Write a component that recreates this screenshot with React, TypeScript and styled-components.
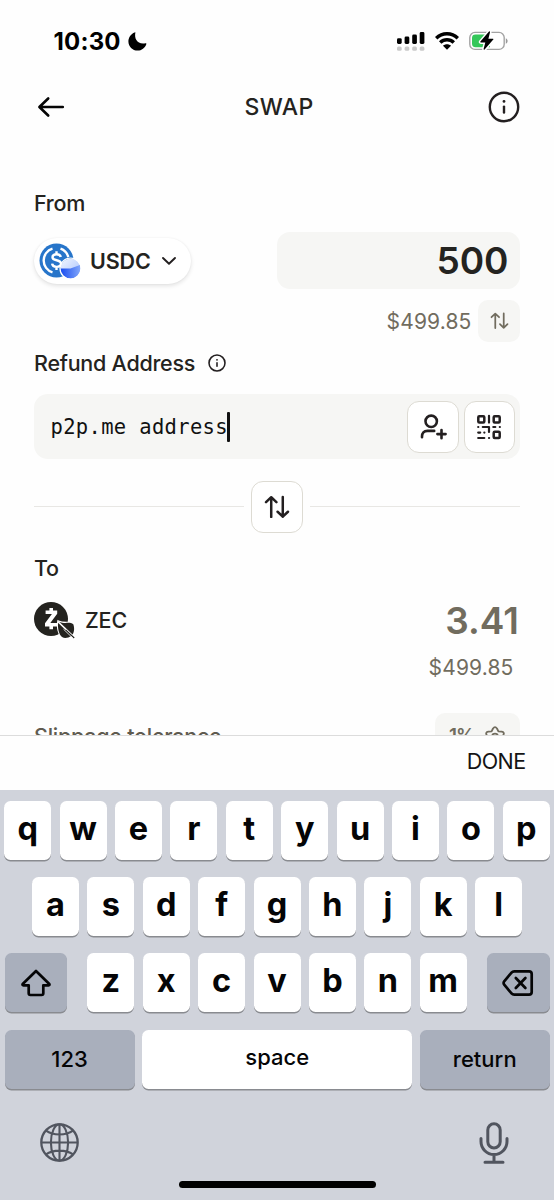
import React from "react";
import styled, { createGlobalStyle } from "styled-components";

const GlobalStyle = createGlobalStyle`
  * { box-sizing: border-box; }
  body { margin: 0; background: #fefefe; }
`;

const ink = "#231f20";
const muted = "#716c5e";
const field = "#f6f6f4";

const Screen = styled.main`
  width: 554px;
  height: 1200px;
  display: flex;
  flex-direction: column;
  overflow: hidden;
  background: #fefefe;
  color: #242320;
  font-family: Inter, "Liberation Sans", sans-serif;
`;

const StatusBar = styled.header`
  flex: none;
  height: 82px;
  padding: 0 46px 0 53.5px;
  display: flex;
  align-items: center;
  color: #000;
`;

const Clock = styled.span`
  font-size: 24px;
  font-weight: 700;
  letter-spacing: 0.2px;
  margin-right: 7px;
`;

const StatusIcons = styled.div`
  margin-left: auto;
  display: flex;
  align-items: center;
  gap: 10px;
`;

const NavBar = styled.nav`
  flex: none;
  height: 50px;
  padding: 0 34px 0 35px;
  display: grid;
  grid-template-columns: 32px 1fr 32px;
  align-items: center;
  justify-items: center;
`;

const Title = styled.h1`
  margin: 0 0 0 3px;
  font-size: 23px;
  font-weight: 500;
  letter-spacing: 0.4px;
`;

const Form = styled.section`
  flex: none;
  height: 603px;
  overflow: hidden;
  padding: 58px 34px 0;
  display: flex;
  flex-direction: column;
`;

const Label = styled.div<{ $top?: number; $height?: number }>`
  flex: none;
  height: ${(p) => p.$height ?? 26}px;
  margin-top: ${(p) => p.$top ?? 0}px;
  display: flex;
  align-items: center;
  gap: 12.5px;
  font-size: 21.5px;
  font-weight: 500;
  letter-spacing: -0.25px;
`;

const Row = styled.div<{ $top: number; $height: number; $end?: boolean }>`
  flex: none;
  height: ${(p) => p.$height}px;
  margin-top: ${(p) => p.$top}px;
  display: flex;
  align-items: center;
  justify-content: ${(p) => (p.$end ? "flex-end" : "space-between")};
`;

const TokenPill = styled.button`
  width: 157px;
  height: 46px;
  padding: 0 0 0 5px;
  border: 0;
  border-radius: 23px;
  background: #fff;
  box-shadow: 0 2px 4px rgba(0, 0, 0, 0.11), 0 0 2px rgba(0, 0, 0, 0.05);
  display: flex;
  align-items: center;
  font: inherit;
  color: inherit;
`;

const Token = styled.div`
  display: flex;
  align-items: center;
`;

const TokenName = styled.span<{ $weight: number; $left: number; $right?: number }>`
  margin-left: ${(p) => p.$left}px;
  margin-right: ${(p) => p.$right ?? 0}px;
  font-size: 21.5px;
  font-weight: ${(p) => p.$weight};
  letter-spacing: -0.15px;
`;

const AmountField = styled.div`
  width: 243px;
  height: 57px;
  padding-right: 11.5px;
  border-radius: 13px;
  background: ${field};
  display: flex;
  align-items: center;
  justify-content: flex-end;
  font-size: 37px;
  font-weight: 600;
`;

const Amount = styled.span`
  margin-right: 1px;
  font-size: 37px;
  font-weight: 600;
  color: ${muted};
`;

const Fiat = styled.span<{ $right: number }>`
  margin-right: ${(p) => p.$right}px;
  font-size: 21px;
  letter-spacing: 0.15px;
  color: ${muted};
`;

const FlipButton = styled.button`
  width: 42px;
  height: 42px;
  padding: 0;
  border: 0;
  border-radius: 10px;
  background: ${field};
  display: grid;
  place-items: center;
`;

const AddressField = styled.div`
  flex: none;
  height: 65px;
  margin-top: 18px;
  padding: 0 5px 0 16.5px;
  border-radius: 14px;
  background: ${field};
  display: flex;
  align-items: center;
  gap: 5px;
`;

const AddressText = styled.div`
  flex: 1;
  display: flex;
  align-items: center;
  font-family: "DejaVu Sans Mono", monospace;
  font-size: 20.5px;
  letter-spacing: 0.33px;
  color: #111;
`;

const Caret = styled.i`
  width: 3px;
  height: 30px;
  margin-left: -1px;
  border-radius: 1px;
  background: #111;
`;

const SquareButton = styled.button`
  width: 51.5px;
  height: 52px;
  padding: 0;
  border: 1.5px solid #dddbd3;
  border-radius: 12px;
  background: #fff;
  display: grid;
  place-items: center;
`;

const Divider = styled.div`
  flex: none;
  margin-top: 21.5px;
  height: 52px;
  display: grid;
  grid-template-columns: 1fr 51.5px 1fr;
  column-gap: 7px;
  align-items: center;
`;

const Rule = styled.span`
  height: 1.5px;
  background: #e8e7e4;
`;

const Slippage = styled.span`
  font-size: 21.5px;
  font-weight: 500;
  letter-spacing: -0.25px;
  color: #5f5b50;
`;

const SlippageChip = styled.div`
  width: 85px;
  height: 45px;
  padding-right: 15px;
  border-radius: 10px;
  background: ${field};
  display: flex;
  align-items: center;
  justify-content: flex-end;
  gap: 11px;
  font-size: 19px;
  font-weight: 600;
  letter-spacing: -1px;
  color: ${muted};
`;

const Accessory = styled.div`
  flex: none;
  height: 55px;
  padding: 0 28.5px 5px 0;
  border-top: 1.5px solid #dcdcdc;
  background: #fefefe;
  display: flex;
  align-items: center;
  justify-content: flex-end;
  font-size: 21.5px;
  letter-spacing: -0.6px;
  color: #141414;
`;

const Keyboard = styled.footer`
  flex: none;
  height: 410px;
  padding: 11px 4.5px 0;
  background: #d0d3db;
  display: flex;
  flex-direction: column;
  align-items: center;
`;

const KeyRow = styled.div<{ $spread?: boolean }>`
  width: ${(p) => (p.$spread ? "100%" : "auto")};
  height: 59.3px;
  margin-bottom: 16.9px;
  display: flex;
  justify-content: ${(p) => (p.$spread ? "space-between" : "center")};
  gap: ${(p) => (p.$spread ? 0 : 8.4)}px;
`;

const KeyGroup = styled.div`
  display: flex;
  gap: 8.4px;
`;

const Key = styled.button<{ $width?: number; $dark?: boolean; $word?: boolean; $lift?: number }>`
  width: ${(p) => p.$width ?? 47}px;
  height: 59px;
  padding: 0 0 ${(p) => p.$lift ?? 4}px;
  border: 0;
  border-radius: 6.5px;
  background: ${(p) => (p.$dark ? "#a9afbc" : "#fff")};
  box-shadow: 0 1.5px 0 #898b90;
  display: flex;
  align-items: center;
  justify-content: center;
  font-family: inherit;
  font-size: ${(p) => (p.$word ? 22 : 32.5)}px;
  font-weight: ${(p) => (p.$word ? 500 : 700)};
  color: #050506;
`;

const KeyboardFooter = styled.div`
  width: 100%;
  height: 46px;
  margin-top: 14px;
  padding: 0 41px 0 34.5px;
  display: flex;
  justify-content: space-between;
  align-items: center;
`;

const HomeIndicator = styled.div`
  width: 197px;
  height: 7px;
  margin-top: 15px;
  border-radius: 4px;
  background: #000;
`;

const Moon = () => (
  <svg width="19" height="19" viewBox="0 0 19 19">
    <path d="M7.4.6C6 6.800 9.500 12.800 17.400 11.300q1.200-.2 1 .7C17 16 13.700 18.600 9.600 18.600 4.500 18.600.4 14.600.4 9.500.4 5.400 2.900 1.800 6.600.4q.9-.2.8.2Z" />
  </svg>
);

const Signal = () => (
  <svg width="28" height="20" viewBox="0 0 28 20">
    <rect x="0" y="7.200" width="4.700" height="5.800" rx="1.400" />
    <rect x="7.600" y="5.500" width="4.700" height="7.500" rx="1.400" />
    <rect x="15.200" y="3.500" width="4.700" height="9.500" rx="1.400" />
    <rect x="22.700" y="1" width="4.700" height="12" rx="1.400" />
    <g fill="#c9c9c9">
      <rect x="0" y="15.500" width="4.700" height="4.300" rx="1.500" />
      <rect x="7.600" y="15.500" width="4.700" height="4.300" rx="1.500" />
      <rect x="15.200" y="15.500" width="4.700" height="4.300" rx="1.500" />
      <rect x="22.700" y="15.500" width="4.700" height="4.300" rx="1.500" />
    </g>
  </svg>
);

const Wifi = () => (
  <svg width="24" height="18" viewBox="0 0 24 18">
    <g fill="none" stroke="#000" strokeWidth="3.500">
      <path d="M1.200 6.200C7.300.4 16.700.4 22.800 6.200" />
      <path d="M5.200 10.600C9.100 6.900 14.900 6.900 18.800 10.600" />
    </g>
    <path d="M12 17.800 8 13.800C10.200 11.800 13.800 11.800 16 13.800Z" />
  </svg>
);

const Battery = () => (
  <svg width="39" height="20" viewBox="0 0 39 20">
    <rect x=".8" y="1.400" width="34.400" height="17" rx="5.200" fill="#fff" stroke="#a3a3a3" strokeWidth="1.400" />
    <path d="M36.800 7.200c2.400 1 2.400 4.600 0 5.600Z" fill="#999" />
    <path d="M6.500 3.600H21V16.200H6.500Q3 16.200 3 12.800V7Q3 3.600 6.500 3.600Z" fill="#34c759" />
    <path
      d="M20 .5 11.400 10.600q-.5.8.4.8h4.500L14.600 18q0 1.200 1 .5L24.300 8.600q.5-.9-.4-.9h-4.500L21 1.200Q21-.4 20 .5Z"
      stroke="#fff"
      strokeWidth="3"
      paintOrder="stroke"
    />
  </svg>
);

const BackArrow = () => (
  <svg width="28" height="22" viewBox="0 0 28 22" fill="none" stroke="#050505" strokeWidth="2.600" strokeLinecap="round" strokeLinejoin="round">
    <path d="M25.800 11H2.500M11.200 2.500 2.400 11l8.800 8.500" />
  </svg>
);

const Info = ({ size, stroke }: { size: number; stroke: number }) => (
  <svg width={size} height={size} viewBox="0 0 32 32" fill="none" stroke={ink} strokeWidth={stroke} strokeLinecap="round">
    <circle cx="16" cy="16" r="14.200" />
    <path d="M16 15.600v6" />
    <path d="M16 10.300v.1" strokeWidth={stroke * 1.15} />
  </svg>
);

const UsdcLogo = () => (
  <svg width="44" height="38" viewBox="0 0 44 38">
    <defs>
      <linearGradient id="sky" x1="0" y1="0" x2="1" y2="1">
        <stop offset="0" stopColor="#f2f6ff" />
        <stop offset="1" stopColor="#a4c0fc" />
      </linearGradient>
      <linearGradient id="base" x1="0" y1="0" x2="1" y2="0">
        <stop offset="0" stopColor="#174bf0" />
        <stop offset="1" stopColor="#84a8fa" />
      </linearGradient>
    </defs>
    <circle cx="17.500" cy="18.500" r="17" fill="#2775ca" />
    <g fill="none" stroke="#fff" strokeWidth="2.400">
      <path d="M13.500 6.700A12.300 12.300 0 0 0 13.500 30.300" />
      <path d="M21.500 6.700A12.300 12.300 0 0 1 29.300 15.100" />
      <path d="M21.800 15.100C21.400 13.100 19.900 12.200 17.500 12.200S13.500 13.200 13.500 15.200C13.500 19.700 22 16.800 22 21.600C22 23.700 20.100 24.900 17.500 24.900S13.400 23.900 13.100 21.700M17.500 9.200V12.200M17.500 24.900V27.900" />
    </g>
    <circle cx="31.500" cy="26.500" r="10" fill="url(#sky)" />
    <path d="M21.500 26.500H31.500L40.900 23.100A10 10 0 1 1 21.500 26.500Z" fill="url(#base)" />
    <circle cx="31.500" cy="26.500" r="10.500" fill="none" stroke="#fff" strokeWidth="1.200" />
  </svg>
);

const ZecLogo = () => (
  <svg width="42" height="38" viewBox="0 0 42 38">
    <circle cx="17" cy="18" r="17" fill="#24231f" />
    <path
      d="M15.400 7h3.600v2.500h4.200v3.300L16.300 22h6.900v3.500H19v2.800h-3.600v-2.800H11v-3.300L17.900 13H11.600V9.500h3.800Z"
      fill="#fff"
    />
    <path
      d="M24.300 20.400C31 23.600 35.500 20.200 39.300 23.300C41 28 40 33 37.300 35C34.300 36.700 31 38 28 36C24.600 32.900 23.300 26.100 24.300 20.400Z"
      fill="#24231f"
      stroke="#fff"
      strokeWidth="2.200"
      paintOrder="stroke"
    />
    <path d="M23.800 20.500 39 35" stroke="#fff" strokeWidth="1.700" />
    <path d="M31.500 29 40.200 37" stroke="#24231f" strokeWidth="1.300" />
    <path d="M29.500 28.200 39.500 37.800" stroke="#fff" strokeWidth="0.800" />
  </svg>
);

const Chevron = () => (
  <svg width="16" height="10" viewBox="0 0 16 10" fill="none" stroke={ink} strokeWidth="1.900" strokeLinecap="round" strokeLinejoin="round">
    <path d="M2 2l6 5.800L14 2" />
  </svg>
);

const SwapArrows = ({ width, stroke, color }: { width: number; stroke: number; color: string }) => (
  <svg width={width} height={width * 0.92} viewBox="0 0 26 24" fill="none" stroke={color} strokeWidth={stroke} strokeLinecap="round" strokeLinejoin="round">
    <path d="M7.200 22V2.200M2 7.200l5.200-5L12.400 7.200" />
    <path d="M18.800 2v19.800M13.600 16.800l5.200 5 5.200-5" />
  </svg>
);

const AddPerson = () => (
  <svg width="28" height="26" viewBox="0 0 28 26" fill="none" stroke={ink} strokeWidth="2.600" strokeLinecap="round" strokeLinejoin="round">
    <circle cx="12.200" cy="7.300" r="5.700" />
    <path d="M3 23.200V22.600Q3 16.900 8.500 16.900H15.200M22.500 16v8.200M18.400 20.100h8.200" />
  </svg>
);

const QrGlyph = () => (
  <svg width="26" height="26" viewBox="0 0 26 26" fill="none" stroke={ink} strokeWidth="2.500" strokeLinecap="round" strokeLinejoin="round">
    <rect x="2.300" y="2.300" width="6" height="6.200" rx="1" />
    <rect x="17.700" y="2.300" width="6" height="6.200" rx="1" />
    <rect x="17.700" y="17.700" width="6" height="6.200" rx="1" />
    <path d="M13 1.800V8.600M2.200 13h.1M6.800 13H13V18M17.300 13h2M23.800 13h.1M2.200 18.600h2M8.300 18.600h.1M2.200 24H8.300M13 24h.1" strokeWidth="2.200" />
  </svg>
);

const StarGear = () => (
  <svg width="20" height="20" viewBox="0 0 20 20" fill="none" stroke={muted} strokeWidth="1.800" strokeLinejoin="round">
    <path d="M8 2.500Q10-.1 12 2.500L13.400 5.400 16.700 5.700Q19.900 6.300 18.300 9L16.400 11.400 17.400 14.600Q17.600 17.700 14.500 17.200L10 15.800 5.500 17.200Q2.400 17.700 2.600 14.600L3.600 11.400 1.700 9Q.1 6.300 3.300 5.700L6.600 5.400Z" />
    <circle cx="10" cy="10.600" r="3" />
  </svg>
);

const Shift = () => (
  <svg width="32" height="28" viewBox="0 0 32 28" fill="none" stroke="#050506" strokeWidth="2.700" strokeLinejoin="round">
    <path d="M16 2 29.300 15Q30 16.300 28.600 16.300H23.300V24.300Q23.300 26 21.600 26H10.400Q8.700 26 8.700 24.300V16.300H3.400Q2 16.300 2.700 15Z" />
  </svg>
);

const Backspace = () => (
  <svg width="32" height="28" viewBox="0 0 32 28" fill="none" stroke="#050506" strokeWidth="2.700" strokeLinecap="round" strokeLinejoin="round">
    <path d="M12.200 2.300H27Q29.700 2.300 29.700 5V23Q29.700 25.700 27 25.700H12.200Q10.600 25.700 9.500 24.400L2.200 15.700Q1 14 2.200 12.300L9.500 3.600Q10.600 2.300 12.200 2.300Z" />
    <path d="M13.800 9 23.400 19M23.400 9 13.800 19" />
  </svg>
);

const Globe = () => (
  <svg width="41" height="41" viewBox="0 0 41 41" fill="none" stroke="#51555f" strokeWidth="2.100">
    <circle cx="20.500" cy="20.500" r="18.200" strokeWidth="2.300" />
    <ellipse cx="20.500" cy="20.500" rx="8.600" ry="18.200" />
    <path d="M20.500 2.500V38.500M2.500 20.500H38.500M7 8.600C14 13.700 27 13.700 34 8.600M7 32.400C14 27.300 27 27.300 34 32.400" />
  </svg>
);

const Mic = () => (
  <svg width="30" height="44" viewBox="0 0 30 44" fill="none" stroke="#51555f" strokeWidth="3" strokeLinecap="round">
    <rect x="8.800" y="2.800" width="12.400" height="24.200" rx="6.200" />
    <path d="M2 17.500V20.500A13 13 0 0 0 28 20.500V17.500M15 33.500V41M6 41.200H24" />
  </svg>
);

export default function App() {
  return (
    <>
      <GlobalStyle />
      <Screen>
        <StatusBar>
          <Clock>10:30</Clock>
          <Moon />
          <StatusIcons>
            <Signal />
            <Wifi />
            <Battery />
          </StatusIcons>
        </StatusBar>
        <NavBar>
          <BackArrow />
          <Title>SWAP</Title>
          <Info size={32} stroke={2.4} />
        </NavBar>

        <Form>
          <Label>From</Label>
          <Row $top={16} $height={57}>
            <TokenPill>
              <UsdcLogo />
              <TokenName $weight={600} $left={7} $right={10}>USDC</TokenName>
              <Chevron />
            </TokenPill>
            <AmountField>500</AmountField>
          </Row>
          <Row $top={11} $height={42} $end>
            <Fiat $right={6.5}>$499.85</Fiat>
            <FlipButton>
              <SwapArrows width={19} stroke={2.4} color={muted} />
            </FlipButton>
          </Row>
          <Label $top={8} $height={26}>
            Refund Address
            <Info size={18} stroke={2.8} />
          </Label>
          <AddressField>
            <AddressText>
              p2p.me address
              <Caret />
            </AddressText>
            <SquareButton><AddPerson /></SquareButton>
            <SquareButton><QrGlyph /></SquareButton>
          </AddressField>
          <Divider>
            <Rule />
            <SquareButton>
              <SwapArrows width={26} stroke={2.5} color={ink} />
            </SquareButton>
            <Rule />
          </Divider>
          <Label $top={22.5}>To</Label>
          <Row $top={19} $height={40}>
            <Token>
              <ZecLogo />
              <TokenName $weight={500} $left={9}>ZEC</TokenName>
            </Token>
            <Amount>3.41</Amount>
          </Row>
          <Row $top={14} $height={26} $end>
            <Fiat $right={6.5}>$499.85</Fiat>
          </Row>
          <Row $top={33} $height={45}>
            <Slippage>Slippage tolerance</Slippage>
            <SlippageChip>
              1%
              <StarGear />
            </SlippageChip>
          </Row>
        </Form>

        <Accessory>DONE</Accessory>

        <Keyboard>
          <KeyRow>
            {"qwertyuiop".split("").map((k) => <Key key={k}>{k}</Key>)}
          </KeyRow>
          <KeyRow>
            {"asdfghjkl".split("").map((k) => <Key key={k}>{k}</Key>)}
          </KeyRow>
          <KeyRow $spread>
            <Key $width={62.5} $dark $lift={0}><Shift /></Key>
            <KeyGroup>
              {"zxcvbnm".split("").map((k) => <Key key={k}>{k}</Key>)}
            </KeyGroup>
            <Key $width={62.5} $dark $lift={0}><Backspace /></Key>
          </KeyRow>
          <KeyRow $spread>
            <Key $width={130} $dark $word $lift={0}>123</Key>
            <Key $width={270} $word $lift={4}>space</Key>
            <Key $width={129.5} $dark $word $lift={0}>return</Key>
          </KeyRow>
          <KeyboardFooter>
            <Globe />
            <Mic />
          </KeyboardFooter>
          <HomeIndicator />
        </Keyboard>
      </Screen>
    </>
  );
}
